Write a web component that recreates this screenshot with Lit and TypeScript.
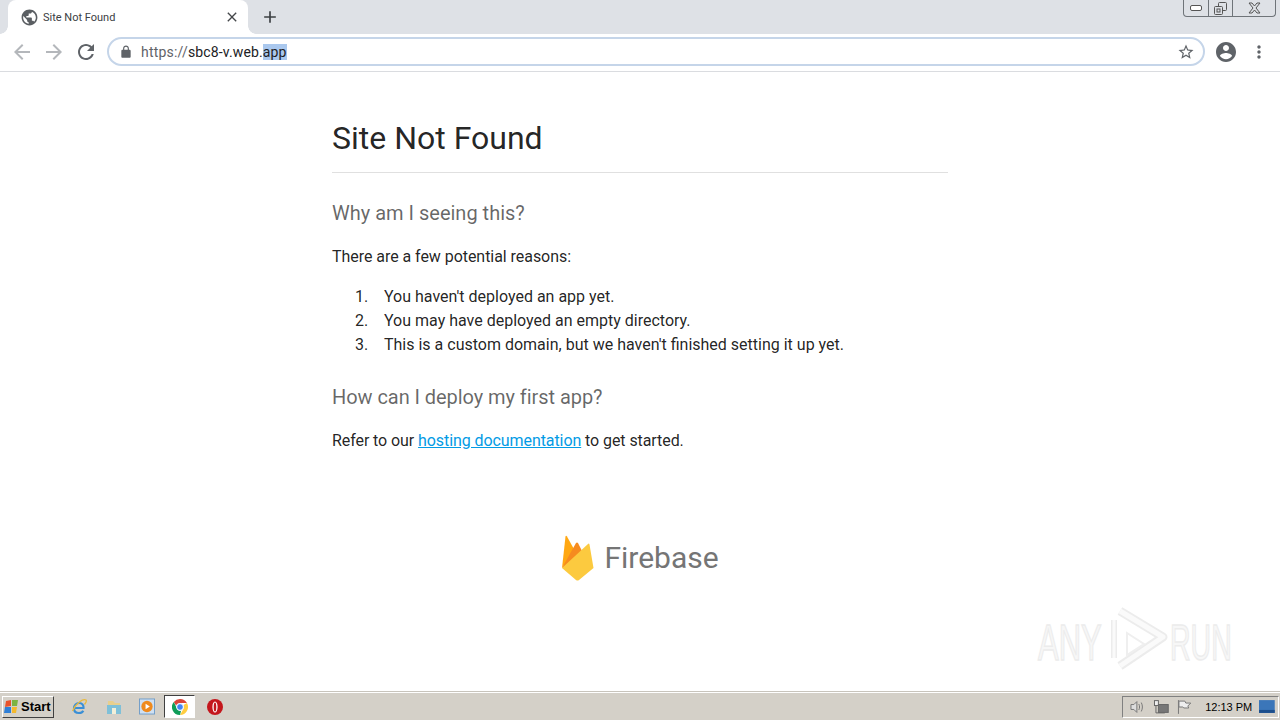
import { LitElement, html, css, svg } from 'lit';
import { customElement } from 'lit/decorators.js';

const mi = (d: string, size: number, color: string) => html`<svg class="mi" width=${size} height=${size} viewBox="0 0 24 24" fill=${color}><path d=${d}></path></svg>`;

const ICONS = {
  globe: 'M12 2C6.48 2 2 6.48 2 12s4.48 10 10 10 10-4.48 10-10S17.52 2 12 2zm-1 17.93c-3.95-.49-7-3.85-7-7.93 0-.62.08-1.21.21-1.79L9 15v1c0 1.1.9 2 2 2v1.93zm6.9-2.54c-.26-.81-1-1.39-1.9-1.39h-1v-3c0-.55-.45-1-1-1H8v-2h2c.55 0 1-.45 1-1V7h2c1.1 0 2-.9 2-2v-.41c2.93 1.19 5 4.06 5 7.41 0 2.08-.8 3.97-2.1 5.39z',
  back: 'M20 11H7.83l5.59-5.59L12 4l-8 8 8 8 1.41-1.41L7.83 13H20v-2z',
  forward: 'M12 4l-1.41 1.41L16.17 11H4v2h12.17l-5.58 5.59L12 20l8-8z',
  reload: 'M17.65 6.35C16.2 4.9 14.21 4 12 4c-4.42 0-7.99 3.58-7.99 8s3.57 8 7.99 8c3.73 0 6.84-2.55 7.73-6h-2.08c-.82 2.33-3.04 4-5.65 4-3.31 0-6-2.69-6-6s2.69-6 6-6c1.66 0 3.14.69 4.22 1.78L13 11h7V4l-2.35 2.35z',
  lock: 'M18 8h-1V6c0-2.76-2.24-5-5-5S7 3.24 7 6v2H6c-1.1 0-2 .9-2 2v10c0 1.1.9 2 2 2h12c1.1 0 2-.9 2-2V10c0-1.1-.9-2-2-2zM9 6c0-1.66 1.34-3 3-3s3 1.34 3 3v2H9V6z',
  star: 'M22 9.24l-7.19-.62L12 2 9.19 8.63 2 9.24l5.46 4.73L5.82 21 12 17.27 18.18 21l-1.63-7.03L22 9.24zM12 15.4l-3.76 2.27 1-4.28-3.32-2.88 4.38-.38L12 6.1l1.71 4.04 4.38.38-3.32 2.88 1 4.28L12 15.4z',
  account: 'M12 2C6.48 2 2 6.48 2 12s4.48 10 10 10 10-4.48 10-10S17.52 2 12 2zm0 3c1.66 0 3 1.34 3 3s-1.34 3-3 3-3-1.34-3-3 1.34-3 3-3zm0 14.2c-2.5 0-4.71-1.28-6-3.22.03-1.99 4-3.08 6-3.08 1.99 0 5.97 1.09 6 3.08-1.29 1.94-3.5 3.22-6 3.22z',
  close: 'M19 6.41L17.59 5 12 10.59 6.41 5 5 6.41 10.59 12 5 17.59 6.41 19 12 13.41 17.59 19 19 17.59 13.41 12z',
  plus: 'M19 13h-6v6h-2v-6H5v-2h6V5h2v6h6v2z',
  dots: 'M12 8c1.1 0 2-.9 2-2s-.9-2-2-2-2 .9-2 2 .9 2 2 2zm0 2c-1.1 0-2 .9-2 2s.9 2 2 2 2-.9 2-2-.9-2-2-2zm0 6c-1.1 0-2 .9-2 2s.9 2 2 2 2-.9 2-2-.9-2-2-2z',
};

const reasons = [
  "You haven't deployed an app yet.",
  'You may have deployed an empty directory.',
  "This is a custom domain, but we haven't finished setting it up yet.",
];

@customElement('app-root')
export class AppRoot extends LitElement {
  static styles = css`
    :host {
      display: flex;
      flex-direction: column;
      height: 720px;
      width: 1280px;
      overflow: hidden;
      position: relative;
      background: #fff;
      font-family: Roboto, sans-serif;
    }
    .mi { display: block; flex: none; }

    /* tab strip */
    .tabstrip {
      height: 34px;
      flex: none;
      background: #dee1e6;
      display: flex;
      align-items: flex-end;
      padding-left: 8px;
    }
    .tab {
      position: relative;
      width: 240px;
      height: 34px;
      box-sizing: border-box;
      background: #fff;
      border-radius: 8px 8px 0 0;
      display: flex;
      align-items: center;
      padding: 0 8px 0 12px;
      font-size: 11px;
      color: #3c4043;
    }
    .tab::before,
    .tab::after {
      content: '';
      position: absolute;
      bottom: 0;
      width: 8px;
      height: 8px;
    }
    .tab::before { left: -8px; background: radial-gradient(circle at 0 0, #dee1e6 7.5px, #fff 8px); }
    .tab::after { right: -8px; background: radial-gradient(circle at 100% 0, #dee1e6 7.5px, #fff 8px); }
    .tab-title { margin-left: 4px; flex: 1; }
    .newtab { margin: 0 0 1px 12px; align-self: center; }
    .winctl {
      margin-left: auto;
      margin-right: 4px;
      align-self: flex-start;
      display: flex;
      height: 17px;
      box-sizing: border-box;
      border: 1px solid #6f7479;
      border-top: none;
      border-radius: 0 0 4px 4px;
    }
    .winctl div {
      display: flex;
      align-items: center;
      justify-content: center;
    }
    .winctl .min { width: 24px; border-right: 1px solid #6f7479; }
    .winctl .max { width: 23px; border-right: 1px solid #6f7479; }
    .winctl .cls { width: 42px; }

    /* toolbar */
    .toolbar {
      height: 38px;
      flex: none;
      box-sizing: border-box;
      border-bottom: 1px solid #dadce0;
      display: flex;
      align-items: center;
      padding: 0 0 2px 10px;
    }
    .nav { display: flex; gap: 8px; }
    .omnibox {
      margin-left: 9px;
      width: 1098px;
      height: 29px;
      box-sizing: border-box;
      border: 2px solid #c5d5e9;
      border-radius: 15px;
      display: flex;
      align-items: center;
      padding: 0 8px 0 10px;
      font-size: 14px;
      color: #202124;
    }
    .url { margin-left: 8px; letter-spacing: 0.13px; }
    .url .scheme { color: #5f6368; letter-spacing: 0.2px; }
    .url .sel { background: #aac8ee; }
    .omnibox .star { margin-left: auto; }
    .account { margin-left: 9px; }
    .menu { margin-left: 11px; }

    /* page */
    main {
      flex: 1;
      padding: 0 0 0 332px;
      position: relative;
    }
    .card { width: 616px; }
    h1 {
      margin: 0;
      padding: 46px 0 14px;
      font-size: 32px;
      line-height: 40px;
      font-weight: 400;
      color: rgba(0, 0, 0, 0.87);
      border-bottom: 1px solid #e0e0e0;
    }
    h2 {
      margin: 0;
      font-size: 20px;
      line-height: 24px;
      font-weight: 400;
      color: rgba(0, 0, 0, 0.6);
    }
    h2.first { margin-top: 28px; }
    p {
      margin: 20px 0 0;
      font-size: 16px;
      line-height: 24px;
      letter-spacing: -0.05px;
      color: rgba(0, 0, 0, 0.87);
    }
    p.refer { letter-spacing: -0.08px; }
    ol {
      margin: 16px 0 0;
      padding: 0 0 0 23px;
      list-style: none;
      counter-reset: reason;
      font-size: 16px;
      line-height: 24px;
      color: rgba(0, 0, 0, 0.87);
    }
    li { display: flex; counter-increment: reason; }
    li::before { content: counter(reason) '.'; width: 29px; flex: none; }
    h2.second { margin-top: 28px; letter-spacing: -0.06px; }
    a { color: #039be5; text-decoration: underline; }
    .brand {
      margin-top: 82px;
      width: 616px;
      display: flex;
      justify-content: center;
      align-items: center;
      gap: 10px;
      font-size: 30px;
      line-height: 46px;
      color: #757575;
    }

    /* watermark */
    .watermark { position: absolute; left: 1036px; top: 534px; }

    /* taskbar */
    .taskbar {
      height: 28px;
      flex: none;
      box-sizing: border-box;
      background: #d4d0c8;
      border-top: 1px solid #fff;
      box-shadow: 0 -1px 0 #c8c4bc;
      display: flex;
      align-items: center;
      padding-left: 2px;
      font-family: 'Liberation Sans', sans-serif;
    }
    .start {
      width: 52px;
      height: 22px;
      box-sizing: border-box;
      background: #d4d0c8;
      border: 1px solid;
      border-color: #fff #404040 #404040 #fff;
      display: flex;
      align-items: center;
      gap: 1px;
      padding-left: 1px;
      font-size: 13px;
      font-weight: 700;
      color: #000;
    }
    .quick { display: flex; align-items: center; margin-left: 17px; gap: 17px; }
    .quick .folder { margin-left: 2px; }
    .quick .active {
      width: 31px;
      height: 23px;
      box-sizing: border-box;
      margin: 0 -5px 0 -8px;
      background: #fff;
      border: 1px solid;
      border-color: #404040 #fff #fff #404040;
      display: flex;
      align-items: center;
      justify-content: center;
    }
    .tray {
      margin-left: auto;
      margin-right: 1px;
      width: 157px;
      height: 22px;
      box-sizing: border-box;
      border: 1px solid;
      border-color: #808080 #fff #fff #808080;
      display: flex;
      align-items: center;
      padding-left: 6px;
      gap: 7px;
      font-size: 11px;
      color: #000;
    }
    .clock { margin-left: 6px; white-space: nowrap; }
    .desk { margin-left: auto; margin-right: 3px; }
  `;

  private flame() {
    return html`<svg width="33" height="46" viewBox="0 0 33 46">
      <path fill="#ffa712" d="M1 33L4.500 1.500Q5 0 6 1.500L14 16z"></path>
      <path fill="#f68b1f" d="M1 33L15 8Q16 7 17 8L23 20z"></path>
      <path fill="#fcca3f" d="M1 33L27 9Q28 8 28.500 9.500L32.500 33 18 45Q16.500 46 15 45z"></path>
    </svg>`;
  }

  private chromeIcon() {
    return html`<svg width="16" height="16" viewBox="0 0 16 16">
      <path fill="#db4437" d="M8 0a8 8 0 0 1 6.930 4H8a4 4 0 0 0-3.800 2.800L1.800 2.900A8 8 0 0 1 8 0z"></path>
      <path fill="#ffcd40" d="M14.930 4A8 8 0 0 1 8 16l3.400-5.900A4 4 0 0 0 11.500 6z"></path>
      <path fill="#0f9d58" d="M8 16A8 8 0 0 1 1.800 2.900l3.400 7.100A4 4 0 0 0 9 12z"></path>
      <circle cx="8" cy="8" r="3.400" fill="#4285f4" stroke="#fff" stroke-width="1"></circle>
    </svg>`;
  }

  render() {
    return html`
      <div class="tabstrip">
        <div class="tab">
          ${mi(ICONS.globe, 19, '#5a5e62')}
          <span class="tab-title">Site Not Found</span>
          ${mi(ICONS.close, 16, '#44474a')}
        </div>
        <span class="newtab">${mi(ICONS.plus, 20, '#3c4043')}</span>
        <div class="winctl">
          <div class="min"><svg width="12" height="6"><rect x=".5" y=".5" width="11" height="5" rx="1.500" fill="#fff" stroke="#555"></rect></svg></div>
          <div class="max"><svg width="13" height="13" fill="none" stroke="#555"><rect x="4.500" y=".5" width="8" height="8" rx="1"></rect><rect x=".5" y="4.500" width="8" height="8" rx="1" fill="#dee1e6"></rect><rect x="3" y="7" width="3" height="3"></rect></svg></div>
          <div class="cls"><svg width="13" height="12" fill="none" stroke="#555"><path d="M1 1l3 0 2.500 3 2.500-3 3 0-4 5 4 5-3 0-2.500-3-2.500 3-3 0 4-5z"></path></svg></div>
        </div>
      </div>
      <div class="toolbar">
        <div class="nav">
          ${mi(ICONS.back, 24, '#b4b7bb')}
          ${mi(ICONS.forward, 24, '#b4b7bb')}
          ${mi(ICONS.reload, 24, '#5f6368')}
        </div>
        <div class="omnibox">
          ${mi(ICONS.lock, 14, '#5f6368')}
          <span class="url"><span class="scheme">https://</span>sbc8-v.web.<span class="sel">app</span></span>
          <span class="star">${mi(ICONS.star, 18, '#5f6368')}</span>
        </div>
        <span class="account">${mi(ICONS.account, 24, '#5f6368')}</span>
        <span class="menu">${mi(ICONS.dots, 20, '#5f6368')}</span>
      </div>
      <main>
        <div class="card">
          <h1>Site Not Found</h1>
          <h2 class="first">Why am I seeing this?</h2>
          <p>There are a few potential reasons:</p>
          <ol>${reasons.map((r) => html`<li>${r}</li>`)}</ol>
          <h2 class="second">How can I deploy my first app?</h2>
          <p class="refer">Refer to our <a href="#">hosting documentation</a> to get started.</p>
          <div class="brand">${this.flame()}<span>Firebase</span></div>
        </div>
        <svg class="watermark" width="200" height="70" viewBox="0 0 200 70">
          ${svg`<g fill="#f7f7f7" stroke="#ececec" stroke-width="1.500" font-family="Liberation Sans, sans-serif" font-size="50">
            <text transform="translate(2 54) scale(.62 1)">ANY</text>
            <text transform="translate(134 54) scale(.57 1)">RUN</text>
          </g>
          <path d="M84 5L127 31 84 60" fill="none" stroke="#ececec" stroke-width="9" stroke-linejoin="round"></path>
          <path d="M84 5L127 31 84 60" fill="none" stroke="#fafafa" stroke-width="5" stroke-linejoin="round"></path>
          <path d="M78 14v38" fill="none" stroke="#ececec" stroke-width="6"></path>
          <path d="M78 14v38" fill="none" stroke="#fafafa" stroke-width="3"></path>
          <path d="M91 27v22l17-11z" fill="none" stroke="#efefef" stroke-width="2"></path>`}
        </svg>
      </main>
      <div class="taskbar">
        <div class="start">
          <svg width="16" height="15" viewBox="0 0 16 15">
            <path fill="#e8532b" d="M2 2l5-1 0 6-6 1z"></path>
            <path fill="#7cb342" d="M8 1l6 0-1 6-5 0z"></path>
            <path fill="#2f7fd6" d="M1 8l6 0 0 6-7 0z"></path>
            <path fill="#f4b92c" d="M8 8l5 0-1 6-4 0z"></path>
          </svg>
          Start
        </div>
        <div class="quick">
          <svg width="16" height="17" viewBox="0 0 16 17" fill="none">
            <path d="M3.500 10h9c.3-3-1.500-5-4.300-5S3 7 3 10.500 5 15 8 15c2 0 3.500-.8 4.300-2.300" stroke="#3a8fd6" stroke-width="2.200"></path>
            <path d="M1.500 13C5 5 12 .5 15 2c1 1.200-.3 3-1.500 4.500" stroke="#e9b93c" stroke-width="1.300"></path>
          </svg>
          <svg class="folder" width="16" height="16" viewBox="0 0 16 16">
            <path fill="#e8cf8c" d="M2 2h5l2 2h5v3H2z"></path>
            <rect x="1" y="6" width="14" height="9" fill="#7fc0d8"></rect>
            <rect x="6" y="9" width="4" height="6" fill="#f2efd8"></rect>
          </svg>
          <svg width="16" height="17" viewBox="0 0 17 17">
            <rect x=".5" y=".5" width="16" height="16" fill="#cfe0f2" stroke="#6f9cc8"></rect>
            <circle cx="8.500" cy="8.500" r="6" fill="#ef8a1d"></circle>
            <path fill="#fff" d="M7 5.500l4.500 3-4.500 3z"></path>
          </svg>
          <div class="active">${this.chromeIcon()}</div>
          <svg width="16" height="16" viewBox="0 0 16 16">
            <circle cx="8" cy="8" r="8" fill="#c4161c"></circle>
            <ellipse cx="8" cy="8" rx="2.600" ry="5.500" fill="#fff"></ellipse>
            <ellipse cx="8" cy="8" rx="1.300" ry="4.500" fill="#c4161c"></ellipse>
          </svg>
        </div>
        <div class="tray">
          <svg width="17" height="16" viewBox="0 0 17 16" fill="none" stroke="#777"><path fill="#ddd" d="M2 5.500h3l3-3v11l-3-3H2z"></path><path d="M10 5c1 2 1 4 0 6M12.500 3.500c1.500 3 1.500 6 0 9"></path></svg>
          <svg width="17" height="16" viewBox="0 0 17 16" fill="none" stroke="#666"><rect x="1.500" y="1.500" width="4" height="5" fill="#eee"></rect><rect x="5.500" y="5.500" width="10" height="8" fill="#777"></rect><path d="M3 7v7h9"></path></svg>
          <svg width="16" height="16" viewBox="0 0 16 16" fill="none" stroke="#777"><path d="M2.500 1v14"></path><path fill="#eee" d="M3 2h6l1 2h5l-3 3 1 2H8L7 8H3z"></path></svg>
          <span class="clock">12:13 PM</span>
          <svg class="desk" width="16" height="15" viewBox="0 0 16 15"><rect width="16" height="13" y="1" fill="#3b76b9"></rect><rect y="11" width="16" height="3" fill="#1d4f8c"></rect></svg>
        </div>
      </div>
    `;
  }
}
